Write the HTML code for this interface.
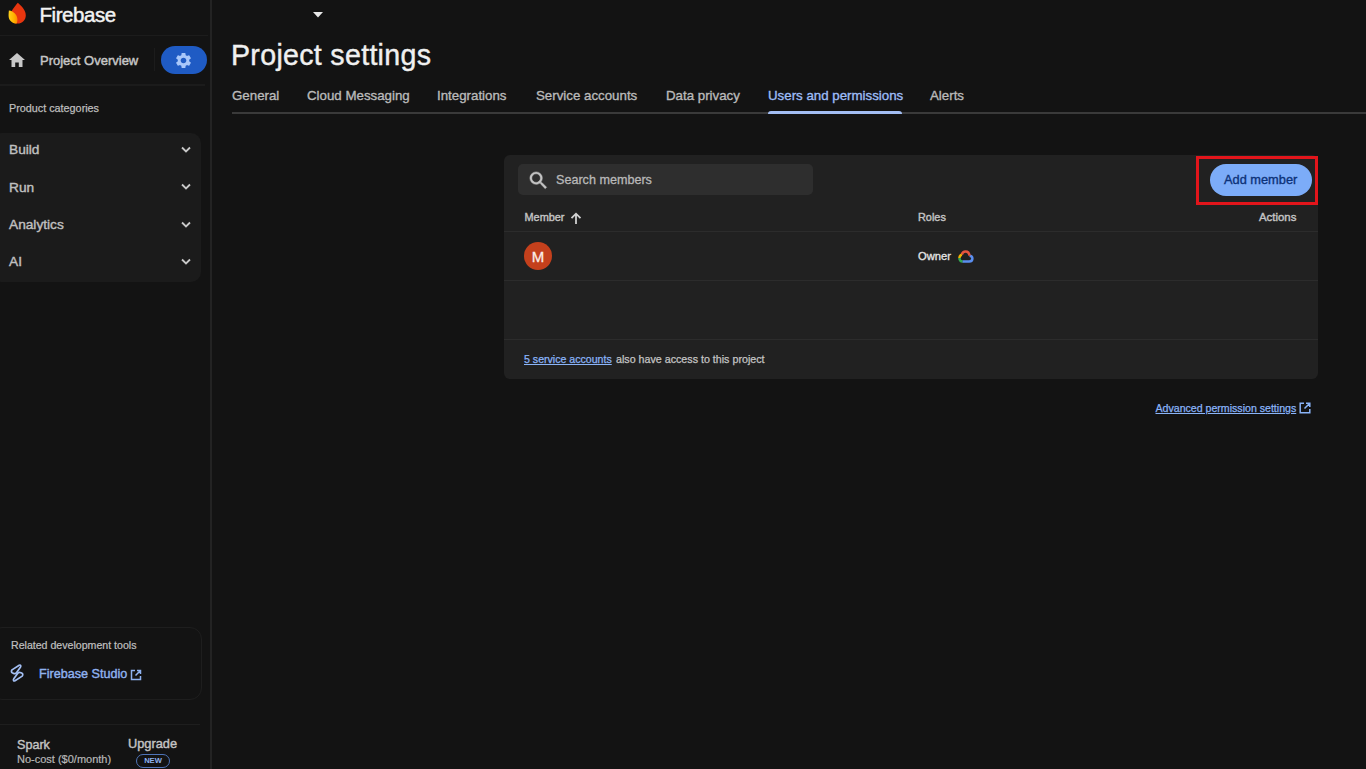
<!DOCTYPE html>
<html><head><meta charset="utf-8">
<style>
*{margin:0;padding:0;box-sizing:border-box}
html,body{-webkit-font-smoothing:antialiased;width:1366px;height:769px;overflow:hidden;background:#131313;font-family:"Liberation Sans",sans-serif;color:#e3e3e3}
.abs{position:absolute;white-space:nowrap}
#side{position:absolute;left:0;top:0;width:210px;height:769px;background:#131313}
#sideborder{position:absolute;left:210px;top:0;width:2px;height:769px;background:#232323}
.t{position:absolute;white-space:nowrap;line-height:1}
.tab{font-size:13.3px;color:#bababa;-webkit-text-stroke:0.35px #bababa}
.hdr{font-size:10.9px;color:#c4c4c4;-webkit-text-stroke:0.4px #c4c4c4}
.cat{font-size:13.7px;color:#c0c0c0;-webkit-text-stroke:0.4px #c0c0c0}
</style></head>
<body>
<div id="side">
  <!-- logo -->
  <svg class="abs" style="left:4px;top:0px" width="28" height="28" viewBox="0 0 28 28">
    <defs><linearGradient id="yg" x1="0" y1="0" x2="1" y2="0"><stop offset="0" stop-color="#ffd21a"/><stop offset="0.6" stop-color="#ffb300"/><stop offset="1" stop-color="#ff8a00"/></linearGradient></defs>
    <path d="M13.8 2.8 C16.5 5.5 21.8 9.5 21.8 15.2 C21.8 20.2 18.2 23.6 13.5 23.6 C9 23.6 6 20.5 6 16.5 C6 12 10.5 7 13.8 2.8 Z" fill="#e8360f"/>
    <path d="M4.9 10.4 C9.8 11 13.2 14.8 13.4 19 C13.5 21 13.1 22.6 12.6 23.6 C8.2 23.4 4.6 20.2 4.6 16 C4.6 13.8 4.7 12.2 4.9 10.4 Z" fill="url(#yg)"/>
  </svg>
  <div class="t" style="left:39.5px;top:4.6px;font-size:20.5px;letter-spacing:-0.45px;color:#f2f2f2;-webkit-text-stroke:0.45px #f2f2f2">Firebase</div>
  <div style="position:absolute;left:0;top:35px;width:208px;height:1px;background:#1c1c1c"></div>
  <!-- project overview -->
  <svg class="abs" style="left:9px;top:53px" width="16" height="14" viewBox="0 0 16 14"><path d="M8 0 L16 7 H13.5 V14 H9.8 V9.5 H6.2 V14 H2.5 V7 H0 Z" fill="#c8c8c8"/></svg>
  <div class="t" style="left:40px;top:54px;font-size:13px;color:#c6c6c6;-webkit-text-stroke:0.45px #c6c6c6">Project Overview</div>
  <div style="position:absolute;left:154px;top:48px;width:1px;height:23px;background:#1c1c1c"></div>
  <div style="position:absolute;left:161px;top:46px;width:46px;height:28px;border-radius:14px;background:#1f5bc4"></div>
  <svg class="abs" style="left:174px;top:51px" width="19" height="19" viewBox="0 0 24 24"><path fill="#a8c7fa" d="M19.14 12.94c.04-.3.06-.61.06-.94 0-.32-.02-.64-.07-.94l2.03-1.58a.49.49 0 0 0 .12-.61l-1.92-3.32a.488.488 0 0 0-.59-.22l-2.39.96c-.5-.38-1.03-.7-1.62-.94l-.36-2.54a.484.484 0 0 0-.48-.41h-3.84c-.24 0-.43.17-.47.41l-.36 2.54c-.59.24-1.13.57-1.62.94l-2.39-.96c-.22-.08-.47 0-.59.22L2.74 8.87c-.12.21-.08.47.12.61l2.03 1.58c-.05.3-.09.63-.09.94s.02.64.07.94l-2.03 1.58a.49.49 0 0 0-.12.61l1.92 3.32c.12.22.37.29.59.22l2.39-.96c.5.38 1.03.7 1.62.94l.36 2.54c.05.24.24.41.48.41h3.84c.24 0 .44-.17.47-.41l.36-2.54c.59-.24 1.13-.56 1.62-.94l2.39.96c.22.08.47 0 .59-.22l1.92-3.32c.12-.22.07-.47-.12-.61l-2.01-1.58zM12 15.6c-1.98 0-3.6-1.62-3.6-3.6s1.62-3.6 3.6-3.6 3.6 1.62 3.6 3.6-1.62 3.6-3.6 3.6z"/></svg>
  <div style="position:absolute;left:0;top:84px;width:205px;height:2px;background:#1b1b1b"></div>
  <div class="t" style="left:9px;top:103px;font-size:10.8px;color:#bdbdbd;-webkit-text-stroke:0.25px #bdbdbd">Product categories</div>
  <!-- categories card -->
  <div style="position:absolute;left:-8px;top:133px;width:209px;height:149px;border-radius:10px;background:#1b1b1b"></div>
  <div class="t cat" style="left:9px;top:143px">Build</div>
  <div class="t cat" style="left:9px;top:180.5px">Run</div>
  <div class="t cat" style="left:9px;top:218px">Analytics</div>
  <div class="t cat" style="left:9px;top:255px">AI</div>
  <svg class="abs" style="left:181px;top:146px" width="10" height="8" viewBox="0 0 10 8"><path d="M1 1.5 L5 5.5 L9 1.5" stroke="#c8c8c8" stroke-width="1.8" fill="none"/></svg>
  <svg class="abs" style="left:181px;top:183px" width="10" height="8" viewBox="0 0 10 8"><path d="M1 1.5 L5 5.5 L9 1.5" stroke="#c8c8c8" stroke-width="1.8" fill="none"/></svg>
  <svg class="abs" style="left:181px;top:221px" width="10" height="8" viewBox="0 0 10 8"><path d="M1 1.5 L5 5.5 L9 1.5" stroke="#c8c8c8" stroke-width="1.8" fill="none"/></svg>
  <svg class="abs" style="left:181px;top:258px" width="10" height="8" viewBox="0 0 10 8"><path d="M1 1.5 L5 5.5 L9 1.5" stroke="#c8c8c8" stroke-width="1.8" fill="none"/></svg>
  <!-- related tools card -->
  <div style="position:absolute;left:-10px;top:627px;width:212px;height:73px;border-radius:12px;border:1px solid #1e1e1e"></div>
  <div class="t" style="left:11px;top:640px;font-size:10.6px;color:#c0c0c0;-webkit-text-stroke:0.2px #c0c0c0">Related development tools</div>
  <svg class="abs" style="left:9px;top:663px" width="16" height="20" viewBox="0 0 16 20"><path d="M10.2 2.2 C11.6 1.6 12.3 2.8 11.4 4.2 L7.6 9.6 C6.8 10.6 5.4 10.8 4.2 10.2 L3.2 9.7 C2.2 9.1 2.2 7.8 3 6.9 Z" stroke="#a3bff3" stroke-width="1.7" fill="none" stroke-linejoin="round"/><path d="M6 17.8 C4.6 18.4 3.9 17.2 4.8 15.8 L8.6 10.4 C9.4 9.4 10.8 9.2 12 9.8 L13 10.3 C14 10.9 14 12.2 13.2 13.1 Z" stroke="#a3bff3" stroke-width="1.7" fill="none" stroke-linejoin="round"/></svg>
  <div class="t" style="left:39px;top:668px;font-size:12.6px;color:#8fb2f0;-webkit-text-stroke:0.4px #8fb2f0">Firebase Studio</div>
  <svg class="abs" style="left:130px;top:669px" width="12" height="12" viewBox="0 0 12 12"><path d="M5 1.5 H1.5 V10.5 H10.5 V7 M7 1.5 H10.5 V5 M10.5 1.5 L5.5 6.5" stroke="#8fb2f0" stroke-width="1.5" fill="none"/></svg>
  <div style="position:absolute;left:0;top:724px;width:200px;height:1px;background:#1e1e1e"></div>
  <div class="t" style="left:17px;top:738.5px;font-size:12.6px;color:#c4c4c4;-webkit-text-stroke:0.4px #c4c4c4">Spark</div>
  <div class="t" style="left:17px;top:754px;font-size:11px;color:#b8b8b8;-webkit-text-stroke:0.2px #b8b8b8">No-cost ($0/month)</div>
  <div class="t" style="left:128px;top:738px;font-size:12.8px;color:#c4c4c4;-webkit-text-stroke:0.4px #c4c4c4">Upgrade</div>
  <div style="position:absolute;left:136px;top:754px;width:34px;height:14px;border-radius:7px;border:1.6px solid #4f74b8"></div>
  <div class="t" style="left:136px;top:756.5px;width:34px;text-align:center;font-size:7.6px;font-weight:bold;color:#8fb2f0">NEW</div>
</div>
<div id="sideborder"></div>
<div id="main">
  <svg class="abs" style="left:313px;top:12px" width="10" height="6" viewBox="0 0 10 6"><path d="M0 0 H10 L5 5.5Z" fill="#e8e8e8"/></svg>
  <div class="t" style="left:231px;top:41px;font-size:28.6px;letter-spacing:0.3px;color:#f0f0f0;-webkit-text-stroke:0.4px #f0f0f0">Project settings</div>
  <div class="t tab" style="left:232px;top:89px">General</div>
  <div class="t tab" style="left:307px;top:89px">Cloud Messaging</div>
  <div class="t tab" style="left:437px;top:89px">Integrations</div>
  <div class="t tab" style="left:536px;top:89px">Service accounts</div>
  <div class="t tab" style="left:666px;top:89px">Data privacy</div>
  <div class="t tab" style="left:768px;top:89px;color:#9dbcf6;-webkit-text-stroke:0.35px #9dbcf6">Users and permissions</div>
  <div class="t tab" style="left:930px;top:89px">Alerts</div>
  <div style="position:absolute;left:232px;top:112px;width:1134px;height:2px;background:#3a3a3a"></div>
  <div style="position:absolute;left:768px;top:111px;width:134px;height:3px;border-radius:3px 3px 0 0;background:#a3bef4"></div>

  <!-- card -->
  <div style="position:absolute;left:504px;top:155px;width:814px;height:224px;border-radius:6px;background:#212121"></div>
  <div style="position:absolute;left:518px;top:164px;width:295px;height:31px;border-radius:5px;background:#2e2e2e"></div>
  <svg class="abs" style="left:527px;top:168.5px" width="23" height="23" viewBox="0 0 24 24"><path fill="#c4c4c4" stroke="#c4c4c4" stroke-width="0.5" d="M15.5 14h-.79l-.28-.27A6.471 6.471 0 0 0 16 9.5 6.5 6.5 0 1 0 9.5 16c1.61 0 3.09-.59 4.23-1.57l.27.28v.79l5 4.99L20.49 19l-4.99-5zm-6 0C7.01 14 5 11.99 5 9.5S7.01 5 9.5 5 14 7.01 14 9.5 11.99 14 9.5 14z"/></svg>
  <div class="t" style="left:556px;top:173.5px;font-size:12.6px;color:#b8b8b8;-webkit-text-stroke:0.3px #b8b8b8">Search members</div>

  <div style="position:absolute;left:1196px;top:156px;width:122px;height:49px;border:3.5px solid #e2151b"></div>
  <div style="position:absolute;left:1210px;top:164px;width:102px;height:32px;border-radius:16px;background:#7cacf8"></div>
  <div class="t" style="left:1224px;top:173.5px;font-size:12.8px;color:#0c3278;-webkit-text-stroke:0.35px #0c3278">Add member</div>

  <div class="t hdr" style="left:524.5px;top:212px">Member</div>
  <svg class="abs" style="left:569.5px;top:212px" width="12" height="12" viewBox="0 0 12 12"><path d="M6 12 V1.8 M1.5 6.2 L6 1.7 L10.5 6.2" stroke="#d0d0d0" stroke-width="1.8" fill="none"/></svg>
  <div class="t hdr" style="left:918px;top:212px">Roles</div>
  <div class="t hdr" style="left:1259px;top:211.5px;font-size:11.4px">Actions</div>
  <div style="position:absolute;left:504px;top:231px;width:814px;height:1px;background:#2c2c2c"></div>

  <div style="position:absolute;left:524px;top:242px;width:28px;height:28px;border-radius:50%;background:#c4401c"></div>
  <div class="t" style="left:524px;top:249px;width:28px;text-align:center;font-size:15px;color:#fbeee8;-webkit-text-stroke:0.3px #fbeee8">M</div>
  <div class="t" style="left:918px;top:250.5px;font-size:11.2px;color:#e6e6e6;-webkit-text-stroke:0.3px #e6e6e6">Owner</div>
  <svg class="abs" style="left:957.5px;top:249.5px" width="16" height="14" viewBox="0 0 16 14">
    <path d="M4.3 11.6 H11.2 C13 11.6 14.4 10.3 14.4 8.6 C14.4 6.9 13.1 5.7 11.5 5.7" stroke="#5a8ef0" stroke-width="2.5" fill="none"/>
    <path d="M11.5 5.7 C11.2 3.3 9.5 1.6 7.6 1.6 C5.8 1.6 4.3 2.8 3.8 4.6" stroke="#e8553e" stroke-width="2.5" fill="none"/>
    <path d="M3.8 4.6 C2.3 5.2 1.4 6.5 1.4 8.1" stroke="#f5b400" stroke-width="2.5" fill="none"/>
    <path d="M1.4 8.1 C1.4 10 2.7 11.6 4.5 11.6" stroke="#34a853" stroke-width="2.5" fill="none"/>
  </svg>
  <div style="position:absolute;left:504px;top:280px;width:814px;height:1px;background:#2c2c2c"></div>
  <div style="position:absolute;left:504px;top:339px;width:814px;height:1px;background:#2c2c2c"></div>

  <div class="t" style="left:524px;top:353.5px;font-size:10.6px;color:#8ab4f8;-webkit-text-stroke:0.25px #8ab4f8;text-decoration:underline;text-underline-offset:1px">5 service accounts</div>
  <div class="t" style="left:616px;top:353.5px;font-size:10.7px;color:#c4c4c4;-webkit-text-stroke:0.25px #c4c4c4">also have access to this project</div>

  <div class="t" style="left:1155.5px;top:402.5px;font-size:10.6px;color:#8ab4f8;-webkit-text-stroke:0.25px #8ab4f8;text-decoration:underline;text-underline-offset:1px">Advanced permission settings</div>
  <svg class="abs" style="left:1299px;top:402px" width="12" height="12" viewBox="0 0 12 12"><path d="M5 1.2 H1.2 V10.8 H10.8 V7 M7 1.2 H10.8 V5 M10.8 1.2 L5.5 6.5" stroke="#8ab4f8" stroke-width="1.5" fill="none"/></svg>
</div>

</body></html>
